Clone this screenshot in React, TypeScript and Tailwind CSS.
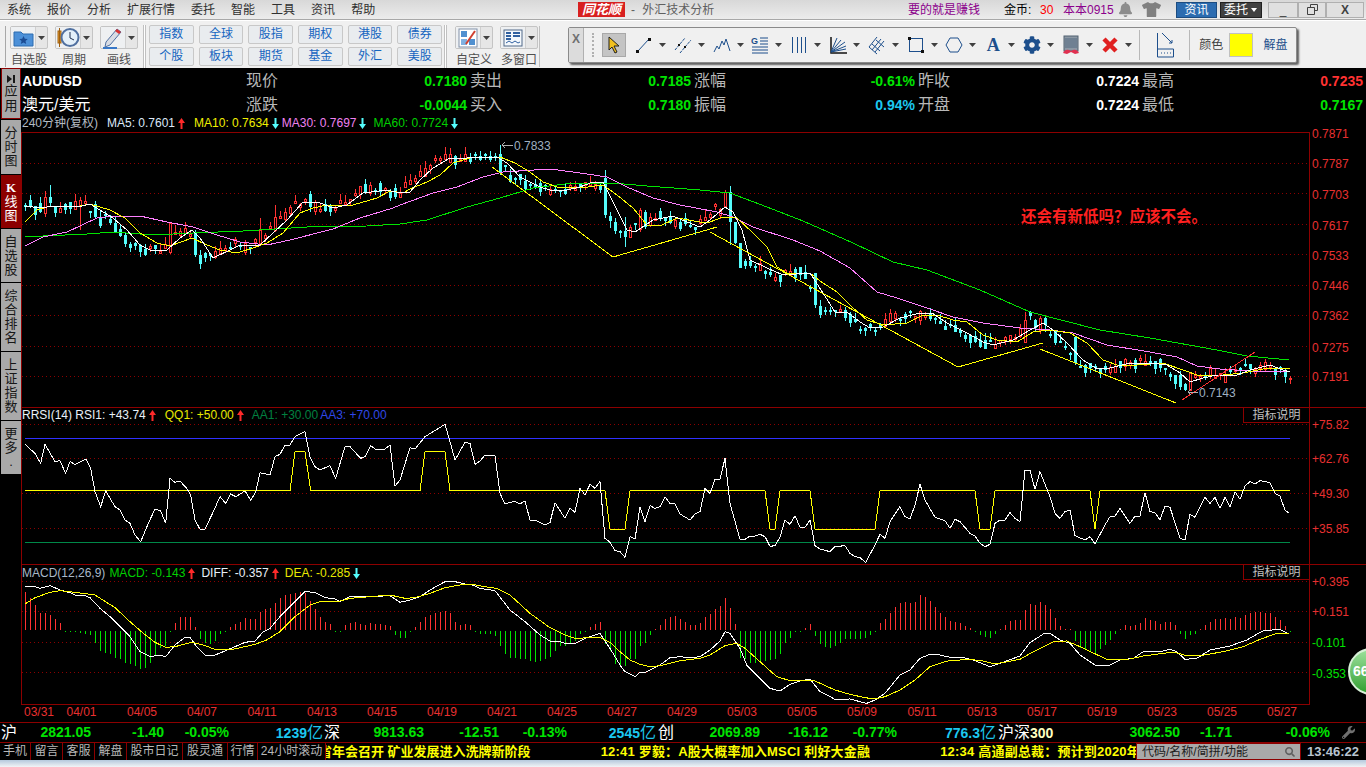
import type { ReactNode } from "react"
import { FaBell, FaCog, FaSearch, FaTshirt, FaWrench } from "react-icons/fa"

type Pt = [number, number]

const pts = (s: string, ox = 0, oy = 0, k = 1): Pt[] =>
    s.trim().split(/\s+/).map((p) => {
        const [a, b] = p.split(",").map(Number)
        return [ox + a / k, oy + b / k] as Pt
    })

const str = (p: Pt[]) => p.map(([x, y]) => `${x},${y}`).join(" ")

/* price lines, page coordinates */
const ma5 = pts("25,206 40,208 55,206 67,207 82,206 90,204 100,210 113,218 127,230 140,245 150,250 167,250 180,238 192,230 200,238 213,258 230,250 240,245 260,245 273,233 287,220 303,202 320,203 333,208 347,205 363,193 387,190 400,193 410,192 420,180 433,168 450,158 467,158 497,157 507,163 520,177 540,187 550,190 567,190 580,187 593,182 603,182 613,202 627,230 635,232 653,220 673,216 687,222 700,227 710,220 725,207 733,212 742,230 750,260 767,268 783,275 810,273 823,293 835,312 847,312 860,322 870,328 883,327 900,318 920,313 932,313 947,323 967,333 983,342 993,345 1013,340 1030,330 1043,323 1053,330 1067,343 1083,360 1097,369 1110,368 1130,363 1150,363 1167,365 1180,373 1190,382 1203,378 1217,375 1237,375 1250,370 1270,365 1283,370 1290,372")
const ma10 = pts("25,222 37,210 50,206 80,206 90,204 110,210 125,218 140,233 157,243 170,246 192,238 207,245 220,250 237,253 253,248 267,243 283,233 300,213 313,208 327,205 353,205 377,198 390,191 403,193 410,189 427,182 440,175 453,163 470,158 500,157 515,163 530,172 543,182 557,187 580,188 603,185 617,195 633,208 647,225 662,225 677,218 700,222 710,222 723,217 737,218 753,233 767,247 777,267 787,273 810,273 820,281 837,292 853,308 867,320 883,325 907,323 923,315 937,315 953,320 967,322 983,335 997,340 1017,342 1033,332 1050,330 1070,333 1087,343 1103,360 1117,365 1137,365 1163,363 1183,370 1200,376 1223,375 1243,373 1263,369 1290,368")
const ma30 = pts("25,246 43,237 67,232 97,218 113,216 140,216 167,222 193,227 217,235 240,242 267,245 290,240 333,229 360,218 393,208 400,205 433,193 457,187 483,177 503,172 550,169 580,173 607,177 627,187 653,198 680,205 717,212 733,217 753,227 793,240 820,251 850,268 877,292 897,298 927,308 953,317 983,323 1020,328 1050,330 1073,333 1107,345 1150,352 1177,357 1197,366 1220,369 1250,371 1289,371")
const ma60 = pts("25,237 43,236 87,234 113,232 153,235 193,233 243,231 307,227 367,226 400,224 427,220 467,207 500,198 533,188 573,183 613,183 647,186 700,190 730,193 767,207 803,221 853,243 893,262 927,270 980,290 1030,312 1100,330 1150,338 1217,350 1247,356 1289,360")
const trendYellow = [
    pts("492,167 613,257 717,227"),
    pts("710,232 958,367 1043,343"),
    pts("1040,349 1176,403"),
]

/* rsi panel */
const rsi = [
    ...pts("75,118 105,145 122,175 135,118 165,170 180,167 197,205 210,170 225,178 258,162 272,190 285,260 302,305 317,258 345,305 360,315 375,345 390,355 405,390 422,410 445,355 465,312 482,318 497,355 510,220 525,232 540,228 560,250 572,270 585,345 600,373 615,372 640,320 660,275 677,295 692,267 707,275 735,258 752,285 767,262 780,203 810,210 825,155 840,148 855,120 870,120 885,95 915,80 930,155 945,185 960,195 990,182 1007,220 1035,125 1050,125 1082,160 1095,155 1112,122 1125,132 1155,132 1170,120 1185,243 1200,225 1230,128 1245,132 1275,95 1335,58 1350,110 1365,165 1395,112 1410,115", 0, 405, 3),
    ...pts("0,118 15,178 30,168 45,150 75,152 90,265 105,297 120,292 135,289 150,297 165,288 180,345 195,345 225,360 240,353 255,293 285,340 300,310 315,322 330,250 345,270 360,238 375,250 390,230 405,400 420,412 435,437 450,440 465,457 480,395 495,402 510,305 525,350 540,302 555,310 570,305 585,275 600,295 615,297 630,327 660,345 675,327 690,320 705,250 720,265 735,223 750,222 765,160 780,295 810,403 825,403 840,393 855,393 870,388 885,395 900,424 915,422 930,397 945,345 960,358 975,332 990,367 1005,367 1020,345 1035,422 1050,432 1080,440 1095,425 1125,422 1140,445 1155,455 1170,458 1187,472 1215,420 1230,388 1245,400 1260,350 1290,305 1305,335 1320,342 1335,300 1350,238 1365,285 1395,337 1425,347", 470, 405, 3),
    ...pts("0,745 15,718 30,725 60,760 75,768 90,790 105,800 120,793 135,730 150,720 165,720 180,698 195,715 210,725 225,570 240,570 255,628 270,575 300,650 315,700 330,715 345,695 360,690 375,767 405,780 420,770 435,792 465,735 480,710 495,708 510,685 540,730 555,708 570,708 585,638 600,695 615,698 630,720 645,678 660,682 690,775 705,780 720,703 735,712 765,652 780,670 795,652 810,685 825,652 840,680 855,635 870,658 885,618 900,605 915,612 930,602 960,608 975,640 990,648 1005,690 1018,700", 950, 280, 3),
]
const qq1 = [
    ...pts("75,257 870,257 885,140 915,140 932,257 1260,257 1275,140 1335,140 1350,257", 0, 405, 3),
    ...pts("405,257 420,373 465,373 480,257 885,257 900,373 915,373 930,257 1020,257 1035,373 1215,373 1230,257", 470, 405, 3),
    ...pts("75,632 90,748 120,748 135,632 420,632 435,748 450,632 1020,632", 950, 280, 3),
]

/* macd panel */
const diff = [
    ...pts("75,545 105,545 120,550 150,542 180,555 210,563 225,570 255,572 270,578 300,610 330,635 360,665 390,695 420,740 450,755 480,750 497,755 525,720 555,697 570,697 590,725 615,750 640,752 675,738 705,725 735,712 765,708 790,680 810,670 840,635 885,590 915,560 945,562 975,578 1005,582 1020,590 1050,575 1110,575 1170,572 1200,592 1230,585 1260,575 1290,555 1335,530 1365,530 1395,537", 0, 405, 3),
    ...pts("0,537 30,550 75,557 120,615 165,650 210,690 240,708 270,710 285,715 315,715 345,700 390,685 420,730 450,780 465,800 495,815 510,802 525,802 570,780 600,758 630,755 660,758 690,755 720,735 750,708 765,680 780,685 810,730 830,780 870,820 900,850 930,858 960,838 990,828 1020,822 1050,860 1080,875 1095,883 1140,882 1170,890 1190,895 1215,885 1245,865 1290,810 1320,795 1350,760 1380,748 1410,750", 470, 405, 3),
    ...pts("30,292 70,293 100,300 150,320 180,310 240,288 270,248 310,222 330,220 360,240 390,250 420,285 470,318 510,315 540,300 580,295 610,275 660,275 690,268 710,275 735,298 770,295 810,270 870,258 920,240 970,212 1020,208 1048,222", 940, 560, 3),
]
const dea = [
    ...pts("75,597 105,578 150,562 180,557 225,562 285,570 345,608 390,650 430,685 465,712 497,727 525,725 575,712 610,720 645,733 690,735 765,718 800,705 840,680 885,635 930,600 960,590 1020,588 1050,580 1110,575 1170,570 1215,580 1245,578 1290,565 1335,548 1380,540 1395,538", 0, 405, 3),
    ...pts("0,537 45,545 80,550 120,570 180,625 240,668 285,690 315,700 390,697 420,712 450,740 480,765 510,778 540,785 570,782 630,767 690,760 720,750 765,722 800,715 825,730 870,770 920,815 960,827 1035,828 1095,855 1140,868 1185,878 1215,882 1245,875 1290,855 1335,825 1380,785 1425,770", 470, 405, 3),
    ...pts("30,302 90,298 130,303 165,312 240,298 280,275 340,245 380,243 420,260 500,298 570,297 610,288 700,276 740,287 780,287 850,275 910,260 960,238 1010,220 1048,220", 940, 560, 3),
]
const bars: [number, number[]][] = [
    [25, [115, 95, 75, 52, 52, 45, 33, 20, -2, -3, -4, -6, -8, -12, -35, -60, -65, -70, -80, -85, -95, -100, -105, -115, -110, -95, -75, -50, -45, -2, 22, 40, 40, 38, 8, -25, -35, -40, -30, -8, -2, 10, 18, 25, 35, 32, 32, 55, 62, 65, 82, 95, 105, 108, 112, 115, 112, 88, 62, 38, 25, 17, -2, -2, 15, 22, 25, 18, 15, 20, 17, 17, 14, 12, -12, -20, -20, -3, 10, 25, 40, 45, 52, 55, 58, 52, 25, 15, 18, 15, -3]],
    [480, [-8, -8, -10, -15, -45, -70, -80, -82, -85, -85, -90, -92, -90, -85, -78, -60, -45, -45, -35, -30, -8, -2, 10, 18, 25, -38, -60, -100, -105, -105, -85, -85, -45, -35, -12, 2, 15, 33, 40, 42, 32, 24, 14, 14, 20, 38, 48, 62, 72, 95, 65, 18, -80, -85, -95, -95, -95, -90, -88, -85, -70, -35, -20, -3, -3, 5, 18, -15, -38, -47, -52, -45, -35, -25, -25, -25, -25, -22, -13, -2, 20, 32, 50, 68, 82, 85, 80, 85, 105, 100, 88, 68, 52, 38]],
    [950, [27, 25, 22, 12, 5, -2, -12, -18, -20, -8, 3, 14, 27, 30, 30, 60, 78, 75, 85, 75, 62, 35, 12, 2, 2, -30, -50, -55, -60, -65, -55, -42, -27, -8, 4, 14, 13, 14, 20, 36, 30, 28, 18, 25, 25, 15, -8, -25, -12, -8, 2, 16, 25, 33, 32, 35, 32, 38, 36, 45, 50, 55, 55, 52, 50, 38, 30, 12, -2]],
]

/* large candles read off the picture: x, up, body top, body bottom, wick top, wick bottom */
const bigCandles: [number, number, number, number, number, number][] = [
    [45, 1, 197, 213, 191, 217], [50, 0, 197, 203, 185, 206], [80, 1, 200, 206, 197, 230], [95, 0, 204, 217, 201, 219],
    [100, 0, 217, 226, 210, 228], [170, 1, 223, 252, 222, 254], [195, 0, 233, 255, 230, 257], [200, 0, 255, 264, 250, 269],
    [260, 1, 230, 243, 218, 245], [275, 1, 217, 230, 205, 232], [310, 0, 194, 207, 191, 212], [500, 0, 154, 172, 145, 175],
    [605, 0, 178, 215, 170, 218], [610, 0, 216, 221, 212, 228], [615, 0, 222, 231, 218, 234], [625, 0, 231, 237, 217, 247],
    [630, 1, 227, 237, 225, 238], [640, 1, 210, 229, 208, 232], [645, 0, 212, 227, 210, 229], [725, 1, 192, 206, 190, 207],
    [730, 0, 192, 222, 186, 245], [735, 0, 222, 243, 222, 244], [740, 0, 243, 268, 243, 268], [815, 0, 273, 305, 273, 308],
    [820, 0, 306, 315, 300, 318], [1025, 1, 320, 342, 312, 343], [1030, 0, 312, 316, 311, 320], [1035, 0, 320, 328, 319, 332],
    [1040, 1, 318, 330, 316, 334], [1045, 0, 318, 325, 315, 332], [1055, 0, 330, 343, 330, 345], [1075, 0, 337, 363, 336, 365],
    [1180, 0, 375, 387, 371, 390], [1185, 0, 384, 390, 383, 391], [1190, 1, 373, 390, 372, 391], [1285, 0, 370, 377, 368, 383],
    [1290, 1, 378, 379, 376, 384],
]

function yAt(line: Pt[], x: number) {
    if (x <= line[0][0]) return line[0][1]
    for (let i = 1; i < line.length; i++) {
        if (x <= line[i][0]) {
            const [x0, y0] = line[i - 1]
            const [x1, y1] = line[i]
            return y0 + ((y1 - y0) * (x - x0)) / (x1 - x0)
        }
    }
    return line[line.length - 1][1]
}

function makeCandles() {
    let seed = 20170527
    const rnd = () => {
        seed = (seed * 1664525 + 1013904223) % 4294967296
        return seed / 4294967296
    }
    const out: [number, number, number, number, number, number][] = []
    for (let x = 25; x <= 1290; x += 5) {
        const a = rnd(), b = rnd(), c = rnd(), d = rnd()
        const big = bigCandles.find((k) => k[0] === x)
        if (big) {
            out.push(big)
            continue
        }
        const mid = yAt(ma5, x + 8) + (a - 0.5) * 8
        const slope = yAt(ma5, x + 5) - yAt(ma5, x - 5)
        const h = 2 + Math.floor(b * b * 8)
        const up = c + slope * -0.08 > 0.55 ? 1 : 0
        const top = Math.round(mid - h / 2)
        out.push([x, up, top, top + h, top - Math.floor(d * 8), top + h + Math.floor((1 - d) * 6)])
    }
    return out
}

const candles = makeCandles()

const RED = "#ff3232"
const LINE = "#8c0000"
const DOT = "#8c0000"
const GREEN = "#00e400"
const CYAN = "#54fcfc"

function Grid({ ys }: { ys: number[] }) {
    return (
        <g stroke={DOT} strokeDasharray="1 3">
            {ys.map((y) => <line key={y} x1="22" x2="1309" y1={y + 0.5} y2={y + 0.5} />)}
        </g>
    )
}

function AxisLabels({ items }: { items: [string, number, string?][] }) {
    return (
        <g fontSize="12">
            {items.map(([t, y, c]) => <text key={t} x="1312" y={y + 4.5} fill={c ?? "#e83030"}>{t}</text>)}
        </g>
    )
}

function Frame({ top, bottom, fullTop }: { top: number; bottom: number; fullTop: boolean }) {
    return (
        <g stroke={LINE}>
            <line x1="21" x2={fullTop ? 1366 : 1309} y1={top + 0.5} y2={top + 0.5} />
            <line x1="21.5" x2="21.5" y1={top} y2={bottom} />
            <line x1="1309.5" x2="1309.5" y1={top} y2={bottom} />
        </g>
    )
}

function PriceChart() {
    return (
        <svg viewBox="21 132 1345 275" className="block w-[1345px] h-[275px] overflow-visible" shapeRendering="crispEdges">
            <Frame top={132} bottom={407} fullTop={false} />
            <Grid ys={[163, 193, 224, 254, 285, 315, 346, 376]} />
            {candles.map(([x, up, t, b, wt, wb]) => (
                <g key={x}>
                    <line x1={x + 0.5} x2={x + 0.5} y1={wt} y2={wb} stroke={up ? RED : CYAN} />
                    {up
                        ? <rect x={x - 0.5} y={t + 0.5} width="2" height={Math.max(b - t, 1)} fill="#000" stroke={RED} />
                        : <rect x={x - 1} y={t} width="3" height={Math.max(b - t, 1)} fill={CYAN} />}
                </g>
            ))}
            <g fill="none">
                <polyline points={str(ma60)} stroke="#00e400" />
                <polyline points={str(ma30)} stroke="#ff80ff" />
                <polyline points={str(ma10)} stroke="#ffff00" />
                <polyline points={str(ma5)} stroke="#ffffff" />
                {trendYellow.map((t, i) => <polyline key={i} points={str(t)} stroke="#ffff00" />)}
                <line x1="1182" y1="400" x2="1255" y2="352" stroke={RED} />
                <polyline points="513,145 502,145" stroke="#b0b0b0" />
                <polyline points="505,142 502,145 505,148" stroke="#b0b0b0" />
                <polyline points="1198,392 1188,392" stroke="#b0b0b0" />
                <polyline points="1191,389 1188,392 1191,395" stroke="#b0b0b0" />
            </g>
            <text x="514" y="149.5" fontSize="12" fill="#9fb0c0">0.7833</text>
            <text x="1199" y="396.5" fontSize="12" fill="#9fb0c0">0.7143</text>
            <AxisLabels items={[["0.7871", 133.5], ["0.7787", 163.5], ["0.7703", 194], ["0.7617", 225], ["0.7533", 255], ["0.7446", 285], ["0.7362", 315.5], ["0.7275", 347], ["0.7191", 376.5]]} />
        </svg>
    )
}

function RsiChart() {
    return (
        <svg viewBox="21 407 1345 157" className="block w-[1345px] h-[157px]" shapeRendering="crispEdges">
            <Frame top={407} bottom={564} fullTop={true} />
            <Grid ys={[424, 458, 493, 528]} />
            <rect x="25" y="438" width="1265" height="1" fill="#3030ff" />
            <rect x="25" y="542" width="1265" height="1" fill="#008848" />
            <polyline points={str(qq1)} fill="none" stroke="#ffff00" />
            <polyline points={str(rsi)} fill="none" stroke="#ffffff" />
            <AxisLabels items={[["+75.82", 424], ["+62.76", 458], ["+49.30", 493], ["+35.85", 528]]} />
        </svg>
    )
}

function MacdChart() {
    return (
        <svg viewBox="21 564 1345 141" className="block w-[1345px] h-[141px]" shapeRendering="crispEdges">
            <Frame top={564} bottom={705} fullTop={true} />
            <line x1="21" x2="1309" y1="704.5" y2="704.5" stroke={LINE} />
            <Grid ys={[581, 611, 642, 672]} />
            {bars.map(([start, vals]) => vals.map((v, i) => {
                const x = start + i * 5 + 0.5
                return <line key={x} x1={x} x2={x} y1={v > 0 ? 630 - v / 3 : 631} y2={v > 0 ? 630 : 631 - v / 3} stroke={v > 0 ? RED : GREEN} />
            }))}
            <polyline points={str(diff)} fill="none" stroke="#ffffff" />
            <polyline points={str(dea)} fill="none" stroke="#ffff00" />
            <AxisLabels items={[["+0.395", 581], ["+0.151", 611], ["-0.101", 642, GREEN], ["-0.353", 673, GREEN]]} />
        </svg>
    )
}

function Arrow({ up }: { up: boolean }) {
    return (
        <svg width="7" height="11" viewBox="0 0 7 11" className="shrink-0" fill={up ? "#ff2a2a" : CYAN}>
            {up
                ? <path d="M3.5 0 7 5H4.5v6h-2V5H0z" />
                : <path d="M3.5 11 7 6H4.5V0h-2v6H0z" />}
        </svg>
    )
}

function Legend({ items }: { items: [string, string, boolean | null, string][] }) {
    return (
        <div className="flex items-center h-[16px] text-[12px] leading-[16px] whitespace-nowrap">
            {items.map(([text, color, up, box]) => (
                <div key={text} className={`flex items-center ${box}`}>
                    <span className={color}>{text}</span>
                    {up !== null && <span className="ml-[3px]"><Arrow up={up} /></span>}
                </div>
            ))}
        </div>
    )
}

function IndicatorButton() {
    return (
        <div className="absolute top-[1px] right-[57px] w-[66px] h-[15px] border-l border-b border-[#8c0000] bg-black text-[12px] leading-[15px] text-center text-[#c0c0c0]">
            指标说明
        </div>
    )
}

function Caret({ className }: { className?: string }) {
    return (
        <svg width="7" height="4" viewBox="0 0 7 4" className={className}>
            <path d="M0 0h7L3.5 4z" fill="#404040" />
        </svg>
    )
}

function TopButton({ label, children }: { label: string; children: ReactNode }) {
    return (
        <div className="flex flex-col items-center w-[38px]">
            <div className="flex w-[38px] h-[23px] border border-[#c4c4c4] rounded-[2px] bg-[#e6e6e6]">
                <div className="w-[25px] flex items-center justify-center border-r border-[#cfcfcf] bg-[#eef0f2]">{children}</div>
                <div className="flex-1 flex items-center justify-center"><Caret /></div>
            </div>
            <span className="mt-[3px] text-[12px] leading-[16px] text-[#505050] whitespace-nowrap">{label}</span>
        </div>
    )
}

function Separator() {
    return <div className="w-[3px] h-[43px] mt-[-1px] border-l border-r border-[#c0c0c0] bg-white" />
}

const quickButtons = ["指数", "全球", "股指", "期权", "港股", "债券", "个股", "板块", "期货", "基金", "外汇", "美股"]

const icon = { width: 20, height: 20, viewBox: "0 0 20 20", fill: "none" }
const BLUE = "#1d4f8c"

const toolIcons: ReactNode[] = [
    <svg {...icon} key="line"><path d="M4 16 15 4" stroke={BLUE} /><rect x="2" y="15" width="3" height="3" fill="#111" /><rect x="14" y="3" width="3" height="3" fill="#111" /></svg>,
    <svg {...icon} key="para"><path d="M2 15 12 3M7 18 18 5" stroke={BLUE} strokeDasharray="3 1" /><rect x="5" y="9" width="2" height="2" fill="#111" /><rect x="11" y="11" width="2" height="2" fill="#111" /></svg>,
    <svg {...icon} key="wave"><path d="M2 17 5 11l2 3 3-8 2 4 2-6 2 6 2 6" stroke={BLUE} /></svg>,
    <svg {...icon} key="gann"><text x="1" y="9" fontSize="9" fontWeight="700" fill={BLUE}>G</text><path d="M10 3h8M10 6h8M10 9h8M2 12h16M2 15h16M2 18h16" stroke={BLUE} /></svg>,
    <svg {...icon} key="vlines"><path d="M3.5 2v16M8.5 2v16M12.5 2v16M16.5 2v16" stroke={BLUE} /></svg>,
    <svg {...icon} key="fan"><path d="M3 2v16h16" stroke="#111" strokeWidth="1.5" /><path d="M3 17 9 3M3 17 13 5M3 17 17 7M3 17 18 11M3 17 18 14" stroke={BLUE} /></svg>,
    <svg {...icon} key="hatch"><path d="M2 12 10 2M5 15l9-11M8 17l9-11M2 12l8 7M5 9l8 7M9 5l8 7" stroke={BLUE} /></svg>,
    <svg {...icon} key="rect"><rect x="3.5" y="3.5" width="13" height="13" stroke={BLUE} /><rect x="2" y="2" width="3" height="3" fill="#111" /><rect x="15" y="15" width="3" height="3" fill="#111" /></svg>,
    <svg {...icon} key="ellipse"><path d="M6 3h8l4 7-4 7H6l-4-7z" stroke={BLUE} strokeLinejoin="round" /></svg>,
    <span key="a" className="[font-family:'Liberation_Serif',serif] font-bold text-[18px] leading-[20px] text-[#1d4f8c]">A</span>,
    <FaCog key="cog" size={18} color="#1d4f8c" />,
    <svg {...icon} key="mark"><rect x="3" y="1" width="14" height="15" fill="#8c98a4" stroke="#506070" /><path d="M4 3h12v10H4z" fill="#6f8092" /><path d="M2 18c2-4 5-4 8-2 3-2 6-2 8 2l-4 1-4-2-4 2z" fill="#e03050" /></svg>,
    <svg {...icon} key="x"><path d="M4 4l12 12M16 4 4 16" stroke="#e02020" strokeWidth="4.5" /></svg>,
]

function DrawingBar() {
    return (
        <div className="ml-[27px] mt-px flex items-center w-[729px] h-[36px] border border-[#8a8a8a] rounded-[2px] bg-[#f0f0f0] shadow-[2px_2px_2px_#606060]">
            <div className="w-[15px] h-full bg-[#dcdcdc] border-r border-[#b0b0b0] text-[#707070] text-[12px] font-bold leading-[22px] text-center">X</div>
            <div className="ml-[8px] h-[24px] w-[2px] border-l-2 border-dotted border-[#b0b0b0]" />
            <div className="ml-[8px] w-[24px] h-[24px] bg-[#c4c4c4] border border-[#a8a8a8] flex items-center justify-center">
                <svg width="14" height="18" viewBox="0 0 14 18">
                    <path d="M2 1v13l3-3 3 6 2-1-3-6h5z" fill="#f0c020" stroke="#202020" />
                </svg>
            </div>
            <div className="ml-[7px] flex">
                {toolIcons.map((t, i) => (
                    <div key={i} className="w-[38.8px] flex items-center">
                        <div className="w-[20px] h-[20px] ml-[1px] flex items-center justify-center">{t}</div>
                        <Caret className="ml-[5px]" />
                    </div>
                ))}
            </div>
            <div className="ml-[2px] w-px h-[30px] bg-[#b8b8b8]" />
            <div className="ml-[15px]">
                <svg width="20" height="26" viewBox="0 0 20 26" fill="none">
                    <path d="M2.5 1v24h16v-8h-16M7 1l10 10M14 11h3V8" stroke={BLUE} />
                    <path d="M6 21h11" stroke={BLUE} strokeDasharray="1 2" />
                </svg>
            </div>
            <div className="ml-[14px] w-px h-[30px] bg-[#b8b8b8]" />
            <span className="ml-[9px] text-[12px] text-[#404040] whitespace-nowrap">颜色</span>
            <div className="ml-[6px] w-[24px] h-[24px] bg-[#ffff00] border border-[#c0c0c0]" />
            <span className="ml-[10px] text-[12px] text-[#1d4f8c] whitespace-nowrap">解盘</span>
        </div>
    )
}

function Toolbar() {
    return (
        <div className="flex items-start h-[48px] pt-[5px] bg-[#f0f0f0] border-t border-white">
            <div className="ml-[5px] w-[2px] h-[41px] border-l border-[#a8a8a8]" />
            <div className="ml-[3px] flex gap-[7px]">
                <TopButton label="自选股">
                    <svg width="21" height="19" viewBox="0 0 21 19">
                        <path d="M1 4h7l2 2h10v12H1z" fill="#4c90d8" stroke="#2c6cb0" />
                        <path d="M10.5 8l1.3 2.8 3 .3-2.3 2 .7 3-2.7-1.6L7.8 16l.7-3-2.3-2 3-.3z" fill="#1b4c94" />
                    </svg>
                </TopButton>
                <TopButton label="周期">
                    <svg width="23" height="21" viewBox="0 0 23 21">
                        <rect x="1" y="4" width="3" height="12" fill="#e8a030" stroke="#a06010" />
                        <path d="M2.5 1v19" stroke="#a06010" />
                        <circle cx="13" cy="10.5" r="8.5" fill="#e4f0fa" stroke="#5070a0" strokeWidth="2" />
                        <path d="M13 5v6l4 2" stroke="#203050" fill="none" />
                    </svg>
                </TopButton>
                <TopButton label="画线">
                    <svg width="22" height="22" viewBox="0 0 22 22">
                        <path d="M1 21h14" stroke="#3878c8" strokeWidth="2" />
                        <path d="M4 15 15 2l4 3L8 18l-5 2z" fill="#d8dce4" stroke="#5070a0" />
                        <path d="M15 2l4 3-2 2-4-3z" fill="#d83030" />
                    </svg>
                </TopButton>
            </div>
            <div className="ml-[5px]"><Separator /></div>
            <div className="ml-[3px] mt-[-1px] grid grid-cols-6 w-[293px] gap-x-[5px] gap-y-[3px]">
                {quickButtons.map((b) => (
                    <div key={b} className="h-[19px] border border-[#c8c8c8] rounded-[2px] bg-[#e9ecef] text-[12px] leading-[17px] text-center text-[#1565c0]">{b}</div>
                ))}
            </div>
            <div className="ml-[2px]"><Separator /></div>
            <div className="ml-[8px] flex gap-[7px]">
                <TopButton label="自定义">
                    <svg width="20" height="20" viewBox="0 0 20 20">
                        <rect x="1" y="1" width="18" height="18" fill="#fff" stroke="#8090a8" />
                        <rect x="3" y="3" width="6" height="6" fill="#5090d0" />
                        <rect x="3" y="11" width="6" height="6" fill="#80b0e0" />
                        <rect x="11" y="11" width="6" height="6" fill="#5090d0" />
                        <path d="M8 16 17 3" stroke="#d04030" strokeWidth="2" />
                    </svg>
                </TopButton>
                <TopButton label="多窗口">
                    <svg width="20" height="18" viewBox="0 0 20 18">
                        <rect x="1" y="1" width="18" height="16" fill="#f4f8fc" stroke="#506888" />
                        <path d="M3 4h5M3 7h5M3 10h5M10 4h7M10 7h7" stroke="#3060a0" strokeWidth="2" />
                        <path d="M3 14l3-2 3 2 3-2 3 2 2-1" stroke="#3060a0" fill="none" />
                    </svg>
                </TopButton>
            </div>
            <div className="ml-[1px] w-[2px] h-[41px] border-l border-[#c0c0c0]" />
            <DrawingBar />
        </div>
    )
}

function TitleBar() {
    return (
        <div className="flex items-center h-[20px] bg-gradient-to-b from-[#d8d8d8] to-[#ececec] border-b border-[#a8a8a8] text-[12px] text-[#303030] whitespace-nowrap">
            <div className="flex gap-[16px] pl-[7px] w-[578px] shrink-0">
                {["系统", "报价", "分析", "扩展行情", "委托", "智能", "工具", "资讯", "帮助"].map((m) => <span key={m}>{m}</span>)}
            </div>
            <div className="w-[47px] h-[15px] bg-[#d82020] text-white font-bold italic text-[13px] leading-[15px] text-center">同花顺</div>
            <span className="ml-[6px] text-[#606060] w-[88px]">- <span className="ml-[4px]">外汇技术分析</span></span>
            <span className="ml-[189px] w-[72px] text-[#8c008c]">要的就是赚钱</span>
            <span className="ml-[24px] w-[36px] text-black">金币:</span>
            <span className="w-[23px] text-[#ff0000]">30</span>
            <span className="w-[55px] text-[#8c008c]">本本0915</span>
            <FaBell size={15} color="#8c8c8c" />
            <span className="ml-[9px]"><FaTshirt size={19} color="#808080" /></span>
            <div className="ml-[15px] w-[41px] h-[16px] bg-[#2c6cb0] border border-[#1c4c80] text-white text-center leading-[14px]">资讯</div>
            <div className="ml-[3px] w-[42px] h-[16px] bg-[#404040] border border-[#202020] text-white flex items-center pl-[3px] gap-[3px]">
                委托<svg width="6" height="4" viewBox="0 0 6 4"><path d="M0 0h6L3 4z" fill="#fff" /></svg>
            </div>
            <div className="ml-[6px] flex h-[16px]">
                <div className="w-[30px] border border-[#b0b0b0] bg-[#e0e0e0] text-center leading-[14px] text-[#404040]">_</div>
                <div className="w-[28px] border border-[#b0b0b0] bg-[#e0e0e0] flex items-center justify-center">
                    <svg width="11" height="11" viewBox="0 0 11 11" fill="none" stroke="#404040"><path d="M3.5 3V.5h7v6H8M.5 3.5h7v7h-7z" /></svg>
                </div>
                <div className="w-[38px] border border-[#b0b0b0] bg-[#e0e0e0] text-center font-bold leading-[14px] text-[#404040]">X</div>
            </div>
        </div>
    )
}

function Tab({ chars, box, active }: { chars: string[]; box: string; active?: boolean }) {
    return (
        <div className={`flex flex-col items-center justify-center w-[20px] ${box} mb-px text-[13px] leading-[14px] ${active ? "bg-[#8c0000] text-white" : "bg-[#a9a9a9] text-[#181818]"}`}>
            {chars.map((c, i) => <span key={i} className={c === "K" ? "[font-family:'Liberation_Serif',serif] font-bold" : ""}>{c}</span>)}
        </div>
    )
}

function Sidebar() {
    return (
        <div className="w-[21px] pl-px shrink-0">
            <div className="flex flex-col items-center justify-center w-[20px] h-[51px] mb-px bg-[#a9a9a9] border border-[#8c0000] text-[13px] leading-[15px] text-[#181818]">
                <svg width="8" height="8" viewBox="0 0 8 8"><path d="M0 0l5 4-5 4zM6 0h2v8H6z" fill="#181818" /></svg>
                <span>应</span>
                <span>用</span>
            </div>
            <Tab chars={["分", "时", "图"]} box="h-[54px]" />
            <Tab chars={["K", "线", "图"]} box="h-[53px]" active />
            <Tab chars={["自", "选", "股"]} box="h-[53px]" />
            <Tab chars={["综", "合", "排", "名"]} box="h-[68px]" />
            <Tab chars={["上", "证", "指", "数"]} box="h-[68px]" />
            <Tab chars={["更", "多", "."]} box="h-[53px]" />
        </div>
    )
}

const quoteRows: [string, string, string][][] = [
    [["现价", "0.7180", "text-[#00e400]"], ["卖出", "0.7185", "text-[#00e400]"], ["涨幅", "-0.61%", "text-[#00e400]"], ["昨收", "0.7224", "text-white"], ["最高", "0.7235", "text-[#ff3232]"]],
    [["涨跌", "-0.0044", "text-[#00e400]"], ["买入", "0.7180", "text-[#00e400]"], ["振幅", "0.94%", "text-[#1cc8f0]"], ["开盘", "0.7224", "text-white"], ["最低", "0.7167", "text-[#00e400]"]],
]

function QuoteRow({ name, bold, cells }: { name: string; bold: boolean; cells: [string, string, string][] }) {
    return (
        <div className="flex items-center h-[24px] whitespace-nowrap">
            <span className={`w-[225px] pl-px text-white ${bold ? "text-[14px] font-bold" : "text-[16px]"}`}>{name}</span>
            {cells.map(([label, value, color], i) => (
                <div key={label} className={`flex items-center justify-between w-[221px] ${i < 4 ? "mr-[3px]" : ""}`}>
                    <span className="text-[16px] text-[#b8b8b8]">{label}</span>
                    <span className={`text-[14px] font-bold ${color}`}>{value}</span>
                </div>
            ))}
        </div>
    )
}

function DateAxis() {
    const dates = ["04/05", "04/07", "04/11", "04/13", "04/15", "04/19", "04/21", "04/25", "04/27", "04/29", "05/03", "05/05", "05/09", "05/11", "05/13", "05/17", "05/19", "05/23", "05/25", "05/27"]
    return (
        <div className="flex h-[17px] text-[12px] leading-[14px] text-[#e83030]">
            <span className="w-[36px] text-center">03/31</span>
            <span className="w-[49px] text-center">04/01</span>
            <div className="ml-[6px] flex">
                {dates.map((d) => <span key={d} className="w-[60px] text-center">{d}</span>)}
            </div>
        </div>
    )
}

function Value({ w, color, children }: { w: string; color: string; children: ReactNode }) {
    return <span className={`${w} text-right text-[14px] font-bold ${color}`}>{children}</span>
}

function Amount({ w, value }: { w: string; value: string }) {
    return (
        <span className={`${w} text-right text-[14px] font-bold text-[#1cc8f0]`}>
            {value}<span className="text-[16px] font-normal">亿</span>
        </span>
    )
}

function IndexBar() {
    const g = "text-[#00e400]"
    return (
        <div className="flex items-center h-[20px] bg-black border-t border-[#8c0000] whitespace-nowrap">
            <span className="w-[20px] pl-[1px] text-[16px] text-white">沪</span>
            <Value w="w-[71px]" color={g}>2821.05</Value>
            <Value w="w-[73px]" color={g}>-1.40</Value>
            <Value w="w-[65px]" color={g}>-0.05%</Value>
            <Amount w="w-[94px]" value="1239" />
            <span className="w-[17px] ml-px text-[16px] text-white">深</span>
            <Value w="w-[83px]" color={g}>9813.63</Value>
            <Value w="w-[75px]" color={g}>-12.51</Value>
            <Value w="w-[68px]" color={g}>-0.13%</Value>
            <Amount w="w-[89px]" value="2545" />
            <span className="w-[17px] ml-[2px] text-[16px] text-white">创</span>
            <Value w="w-[85px]" color={g}>2069.89</Value>
            <Value w="w-[68px]" color={g}>-16.12</Value>
            <Value w="w-[69px]" color={g}>-0.77%</Value>
            <Amount w="w-[99px]" value="776.3" />
            <span className="ml-[2px] w-[57px] text-[16px] text-white">沪深<span className="text-[14px] font-bold text-[#ffffc0]">300</span></span>
            <Value w="w-[125px]" color={g}>3062.50</Value>
            <Value w="w-[52px]" color={g}>-1.71</Value>
            <Value w="w-[98px]" color={g}>-0.06%</Value>
            <span className="ml-[12px]"><FaWrench size={13} color="#707070" /></span>
        </div>
    )
}

const bottomTabs: [string, string][] = [
    ["手机", "w-[31px]"], ["留言", "w-[32px]"], ["客服", "w-[32px]"], ["解盘", "w-[32px]"],
    ["股市日记", "w-[56px]"], ["股灵通", "w-[45px]"], ["行情", "w-[30px]"], ["24小时滚动", "w-[68px]"],
]

function TickerBar() {
    return (
        <div className="flex items-center h-[18px] bg-black border-t border-[#8c0000] text-[12px] whitespace-nowrap">
            {bottomTabs.map(([t, w]) => (
                <span key={t} className={`${w} h-full text-center leading-[17px] text-[#b8b8b8] border-r border-[#8c0000]`}>{t}</span>
            ))}
            <div className="w-[810px] flex gap-[70px] overflow-hidden text-[13px] font-bold leading-[17px] text-[#ffff00]">
                <span className="ml-[-7px]">省年会召开 矿业发展进入洗牌新阶段</span>
                <span className="tracking-[0.2px]">12:41 罗毅：A股大概率加入MSCI 利好大金融</span>
                <span className="tracking-[0.2px]">12:34 高通副总裁：预计到2020年</span>
            </div>
            <div className="flex items-center justify-between w-[165px] h-full px-[5px] bg-[#a9a9a9] border border-[#8c0000] text-[#202020]">
                <span>代码/名称/简拼/功能</span>
                <FaSearch size={10} color="#606060" />
            </div>
            <span className="ml-[6px] text-[13px] font-bold text-[#b8c4d0]">13:46:22</span>
        </div>
    )
}

export default function App() {
    return (
        <div className="relative flex flex-col w-[1366px] h-[767px] overflow-hidden bg-black [font-family:'Liberation_Sans','Noto_Sans_CJK_SC',sans-serif]">
            <TitleBar />
            <Toolbar />
            <div className="flex h-[654px]">
                <Sidebar />
                <div className="w-[1345px]">
                    <div className="pt-px">
                        <QuoteRow name="AUDUSD" bold cells={quoteRows[0]} />
                        <QuoteRow name="澳元/美元" bold={false} cells={quoteRows[1]} />
                    </div>
                    <div className="h-[17px] mt-[-2px] pl-px">
                        <Legend items={[
                            ["240分钟(复权)", "text-[#b4bcc4] w-[85px]", null, ""],
                            ["MA5: 0.7601", "text-[#dce8f8]", true, ""],
                            ["MA10: 0.7634", "text-[#f0f000]", false, "ml-[9px]"],
                            ["MA30: 0.7697", "text-[#f080f0]", false, "ml-[3px]"],
                            ["MA60: 0.7724", "text-[#00d000]", false, "ml-[7px]"],
                        ]} />
                    </div>
                    <div className="relative">
                        <PriceChart />
                        <span className="absolute left-[1000px] top-[73px] text-[15.5px] font-bold text-[#ff2020] whitespace-nowrap">还会有新低吗？应该不会。</span>
                    </div>
                    <div className="relative">
                        <RsiChart />
                        <div className="absolute left-px top-0">
                            <Legend items={[
                                ["RRSI(14) RSI1: +43.74", "text-[#e8f0f8]", true, ""],
                                ["QQ1: +50.00", "text-[#e8e800]", true, "ml-[9px]"],
                                ["AA1: +30.00", "text-[#008040]", null, "ml-[8px]"],
                                ["AA3: +70.00", "text-[#3048e8]", null, "ml-[2px]"],
                            ]} />
                        </div>
                        <IndicatorButton />
                    </div>
                    <div className="relative">
                        <MacdChart />
                        <div className="absolute left-px top-[1px]">
                            <Legend items={[
                                ["MACD(12,26,9)", "text-[#a8b8c8] mr-[4px]", null, ""],
                                ["MACD: -0.143", "text-[#00d000]", true, ""],
                                ["DIFF: -0.357", "text-[#e8f0f8]", true, "ml-[6px]"],
                                ["DEA: -0.285", "text-[#e8e800]", false, "ml-[6px]"],
                            ]} />
                        </div>
                        <IndicatorButton />
                    </div>
                    <DateAxis />
                </div>
            </div>
            <IndexBar />
            <TickerBar />
            <div className="h-[7px] bg-gradient-to-b from-[#b4c8dc] to-[#f2f4f6]" />
            <div className="absolute right-0 top-[648px] w-[18px] h-[47px] overflow-hidden">
                <div className="w-[47px] h-[47px] rounded-full border-2 border-[#d8f0d8] bg-gradient-to-b from-[#9be09b] to-[#2ea02e] text-white font-bold text-[14px] leading-[43px] pl-[3px]">66</div>
            </div>
        </div>
    )
}
